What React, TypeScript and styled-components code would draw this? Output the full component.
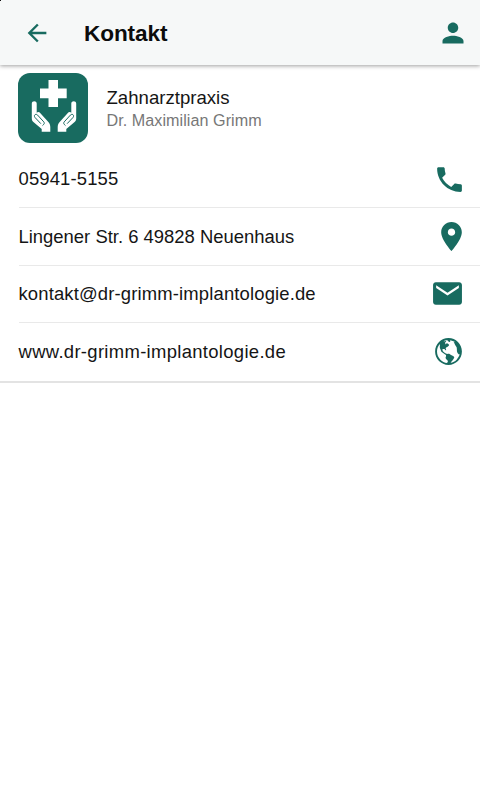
import React from "react";
import styled, { createGlobalStyle } from "styled-components";
import { IoMdArrowBack, IoMdCall, IoMdGlobe, IoMdMail, IoMdPerson, IoMdPin } from "react-icons/io";

const GlobalStyle = createGlobalStyle`
  * { box-sizing: border-box; }
  body {
    margin: 0;
    background: #fff;
    color: #151515;
    font-family: "Liberation Sans", Arial, sans-serif;
  }
`;

const green = "#186b60";

const Page = styled.main`
  min-height: 800px;
  background: #fff;
`;

const Header = styled.header`
  position: relative;
  display: flex;
  align-items: center;
  height: 65px;
  padding: 0 13px 0 23px;
  background: #f6f8f8;
  box-shadow: 0 1px 4px rgba(0, 0, 0, 0.38);
`;

/* Dark speck in the top left corner of the screen. */
const Corner = styled.span`
  position: absolute;
  top: 0;
  left: 0;
  width: 1px;
  height: 1px;
  background: #111;
`;

const HeaderButton = styled.button`
  display: flex;
  padding: 0;
  border: 0;
  background: none;
  color: ${green};
  font-size: 28px;
`;

const Title = styled.h1`
  flex: 1;
  margin: 2px 0 0 33px;
  font-size: 22.6px;
  line-height: 28px;
  font-weight: 700;
  letter-spacing: -0.1px;
  color: #0c0c0c;
`;

const Practice = styled.section`
  display: flex;
  align-items: center;
  height: 86px;
  padding: 0 18px;
`;

const Logo = styled.svg`
  display: block;
  flex: none;
  width: 70px;
  height: 70px;
  margin: -1px 18.5px 0 0;
`;

const PracticeText = styled.div`
  padding-top: 1.5px;
`;

const PracticeName = styled.div`
  font-size: 18.6px;
  line-height: 23px;
`;

const Doctor = styled.div`
  font-size: 16.15px;
  line-height: 22px;
  letter-spacing: 0.05px;
  color: #777;
`;

const List = styled.ul`
  margin: 0;
  padding: 0 0 0 18.5px;
  list-style: none;
  border-bottom: 2px solid #e3e3e3;
`;

const Item = styled.li`
  display: flex;
  align-items: center;
  justify-content: space-between;
  height: 57.4px;
  padding-right: 15px;
  border-bottom: 1px solid #e9e9e9;
  &:last-child { border-bottom: 0; }
`;

const Label = styled.span<{ $spacing: number }>`
  font-size: 18.46px;
  line-height: 24px;
  letter-spacing: ${(p) => p.$spacing}px;
`;

const ItemIcon = styled.span<{ $shift: number }>`
  display: flex;
  margin-right: ${(p) => p.$shift}px;
  color: ${green};
  font-size: 33px;
`;

const contacts = [
  { text: "05941-5155", Icon: IoMdCall, spacing: 0.15, shift: -1 },
  { text: "Lingener Str. 6 49828 Neuenhaus", Icon: IoMdPin, spacing: 0, shift: -3 },
  { text: "kontakt@dr-grimm-implantologie.de", Icon: IoMdMail, spacing: 0.15, shift: 1 },
  { text: "www.dr-grimm-implantologie.de", Icon: IoMdGlobe, spacing: 0.32, shift: 0 },
];

function PracticeLogo() {
  return (
    <Logo viewBox="0 0 70 70" aria-hidden="true">
      <rect width="70" height="70" rx="12" fill={green} />
      <path d="M30.5 7H40v8.5h8.7v9.7H40V34h-9.5v-8.8H22v-9.7h8.5z" fill="#fff" />
      <g id="hand">
        <path
          d="M13.8 30.4c0-2.9 4.9-2.9 4.9 0v9.3c1.2-1 2.7-.7 3.7.5l7.5 8.4c1.6 1.8 2.4 3.3 2.4 5.4v4.8h-8.6v-2.7L15.4 49c-1.1-1.1-1.6-2-1.6-3.6z"
          fill="#fff"
        />
        <path
          d="M24.8 52.3l1-1c.7-.8.6-1.6 0-2.4l-6.2-6.8c-1.1-1.2-2.5-.9-3 .1-.4.9-.1 1.7.6 2.5l5.4 5.7"
          fill="none"
          stroke={green}
          strokeWidth="1"
          strokeLinecap="round"
        />
      </g>
      <use href="#hand" transform="translate(72 0) scale(-1 1)" />
    </Logo>
  );
}

export default function App() {
  return (
    <Page>
      <GlobalStyle />
      <Header>
        <Corner />
        <HeaderButton aria-label="Zurück"><IoMdArrowBack /></HeaderButton>
        <Title>Kontakt</Title>
        <HeaderButton aria-label="Profil"><IoMdPerson /></HeaderButton>
      </Header>
      <Practice>
        <PracticeLogo />
        <PracticeText>
          <PracticeName>Zahnarztpraxis</PracticeName>
          <Doctor>Dr. Maximilian Grimm</Doctor>
        </PracticeText>
      </Practice>
      <List>
        {contacts.map(({ text, Icon, spacing, shift }) => (
          <Item key={text}>
            <Label $spacing={spacing}>{text}</Label>
            <ItemIcon $shift={shift}><Icon /></ItemIcon>
          </Item>
        ))}
      </List>
    </Page>
  );
}
